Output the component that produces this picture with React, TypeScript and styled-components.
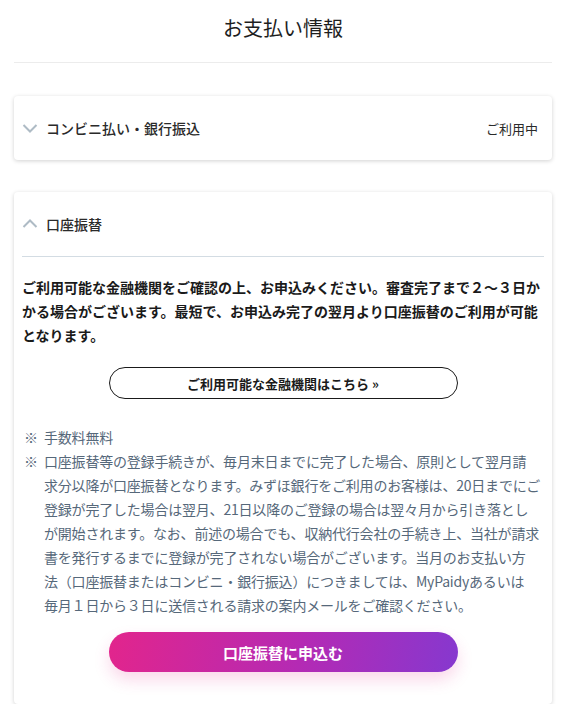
import React from "react";
import styled, { createGlobalStyle } from "styled-components";

const GlobalStyle = createGlobalStyle`
  * {
    box-sizing: border-box;
  }
  body {
    margin: 0;
    background: #ffffff;
    font-family: "Noto Sans CJK JP", "Noto Sans", sans-serif;
    color: #222222;
  }
`;

const Page = styled.div`
  width: 566px;
  padding: 0 14px;
`;

const Title = styled.h1`
  margin: 0;
  height: 63px;
  padding-top: 13px;
  font-size: 20px;
  font-weight: 400;
  line-height: 30px;
  text-align: center;
  color: #1e1e1e;
  border-bottom: 1px solid #ececec;
`;

const CardList = styled.div`
  display: flex;
  flex-direction: column;
  gap: 32px;
  padding-top: 33px;
`;

const Card = styled.section`
  background: #ffffff;
  border-radius: 4px;
  box-shadow: 0 1px 4px rgba(0, 0, 0, 0.18);
  padding: 0 8px;
`;

const Header = styled.div`
  display: flex;
  align-items: center;
  height: 64px;
  padding-right: 6px;
`;

const Chevron = styled.svg`
  width: 16px;
  height: 16px;
  margin-right: 8px;
  flex-shrink: 0;
`;

const HeaderLabel = styled.span`
  flex: 1;
  font-size: 14px;
  font-weight: 500;
  color: #2a2a2a;
`;

const Status = styled.span`
  font-size: 13px;
  color: #2a2a2a;
`;

const Body = styled.div`
  border-top: 1px solid #d3dce3;
  padding: 18px 0 32px;
  display: flex;
  flex-direction: column;
`;

const Lead = styled.p`
  margin: 0;
  font-size: 14px;
  font-weight: 700;
  line-height: 24px;
  color: #1a1a1a;
`;

const OutlineButton = styled.button`
  align-self: center;
  margin-top: 20px;
  width: 349px;
  height: 32px;
  border: 1.5px solid #1a1a1a;
  border-radius: 16px;
  background: #ffffff;
  font-family: inherit;
  font-size: 13px;
  font-weight: 700;
  color: #1a1a1a;
  cursor: pointer;
`;

const Notes = styled.ul`
  list-style: none;
  margin: 26px 0 0;
  padding: 0;
  font-size: 14px;
  line-height: 24px;
  color: #56687a;
`;

const Note = styled.li`
  display: flex;
`;

const Mark = styled.span`
  width: 22px;
  flex-shrink: 0;
  padding-left: 2px;
`;

const NoteText = styled.span`
  letter-spacing: -0.2px;
`;

const PrimaryButton = styled.button`
  align-self: center;
  margin-top: 15px;
  width: 349px;
  height: 40px;
  border: none;
  border-radius: 20px;
  background: linear-gradient(100deg, #e2258c 0%, #b42ab4 55%, #8638cf 100%);
  box-shadow: 0 8px 16px rgba(226, 37, 140, 0.18);
  font-family: inherit;
  font-size: 15px;
  font-weight: 700;
  color: #ffffff;
  cursor: pointer;
`;

const ChevronIcon = ({ up }: { up?: boolean }) => (
  <Chevron viewBox="0 0 16 16">
    <path
      d={up ? "M1.5 11 L8 4.5 L14.5 11" : "M1.5 5 L8 11.5 L14.5 5"}
      fill="none"
      stroke="#aebbc5"
      strokeWidth="2"
    />
  </Chevron>
);

// line breaks follow the original page
const noteLines = [
  "口座振替等の登録手続きが、毎月末日までに完了した場合、原則として翌月請",
  "求分以降が口座振替となります。みずほ銀行をご利用のお客様は、20日までにご",
  "登録が完了した場合は翌月、21日以降のご登録の場合は翌々月から引き落とし",
  "が開始されます。なお、前述の場合でも、収納代行会社の手続き上、当社が請求",
  "書を発行するまでに登録が完了されない場合がございます。当月のお支払い方",
  "法（口座振替またはコンビニ・銀行振込）につきましては、MyPaidyあるいは",
  "毎月１日から３日に送信される請求の案内メールをご確認ください。",
];

const App = () => {
  return (
    <Page>
      <GlobalStyle />
      <Title>お支払い情報</Title>
      <CardList>
        <Card>
          <Header>
            <ChevronIcon />
            <HeaderLabel>コンビニ払い・銀行振込</HeaderLabel>
            <Status>ご利用中</Status>
          </Header>
        </Card>
        <Card>
          <Header>
            <ChevronIcon up />
            <HeaderLabel>口座振替</HeaderLabel>
          </Header>
          <Body>
            <Lead>
              ご利用可能な金融機関をご確認の上、お申込みください。審査完了まで２～３日かかる場合がございます。最短で、お申込み完了の翌月より口座振替のご利用が可能となります。
            </Lead>
            <OutlineButton>ご利用可能な金融機関はこちら »</OutlineButton>
            <Notes>
              <Note>
                <Mark>※</Mark>
                <NoteText>手数料無料</NoteText>
              </Note>
              <Note>
                <Mark>※</Mark>
                <NoteText>
                  {noteLines.map((line, i) => (
                    <React.Fragment key={i}>
                      {line}
                      {i < noteLines.length - 1 && <br />}
                    </React.Fragment>
                  ))}
                </NoteText>
              </Note>
            </Notes>
            <PrimaryButton>口座振替に申込む</PrimaryButton>
          </Body>
        </Card>
      </CardList>
    </Page>
  );
};

export default App;
